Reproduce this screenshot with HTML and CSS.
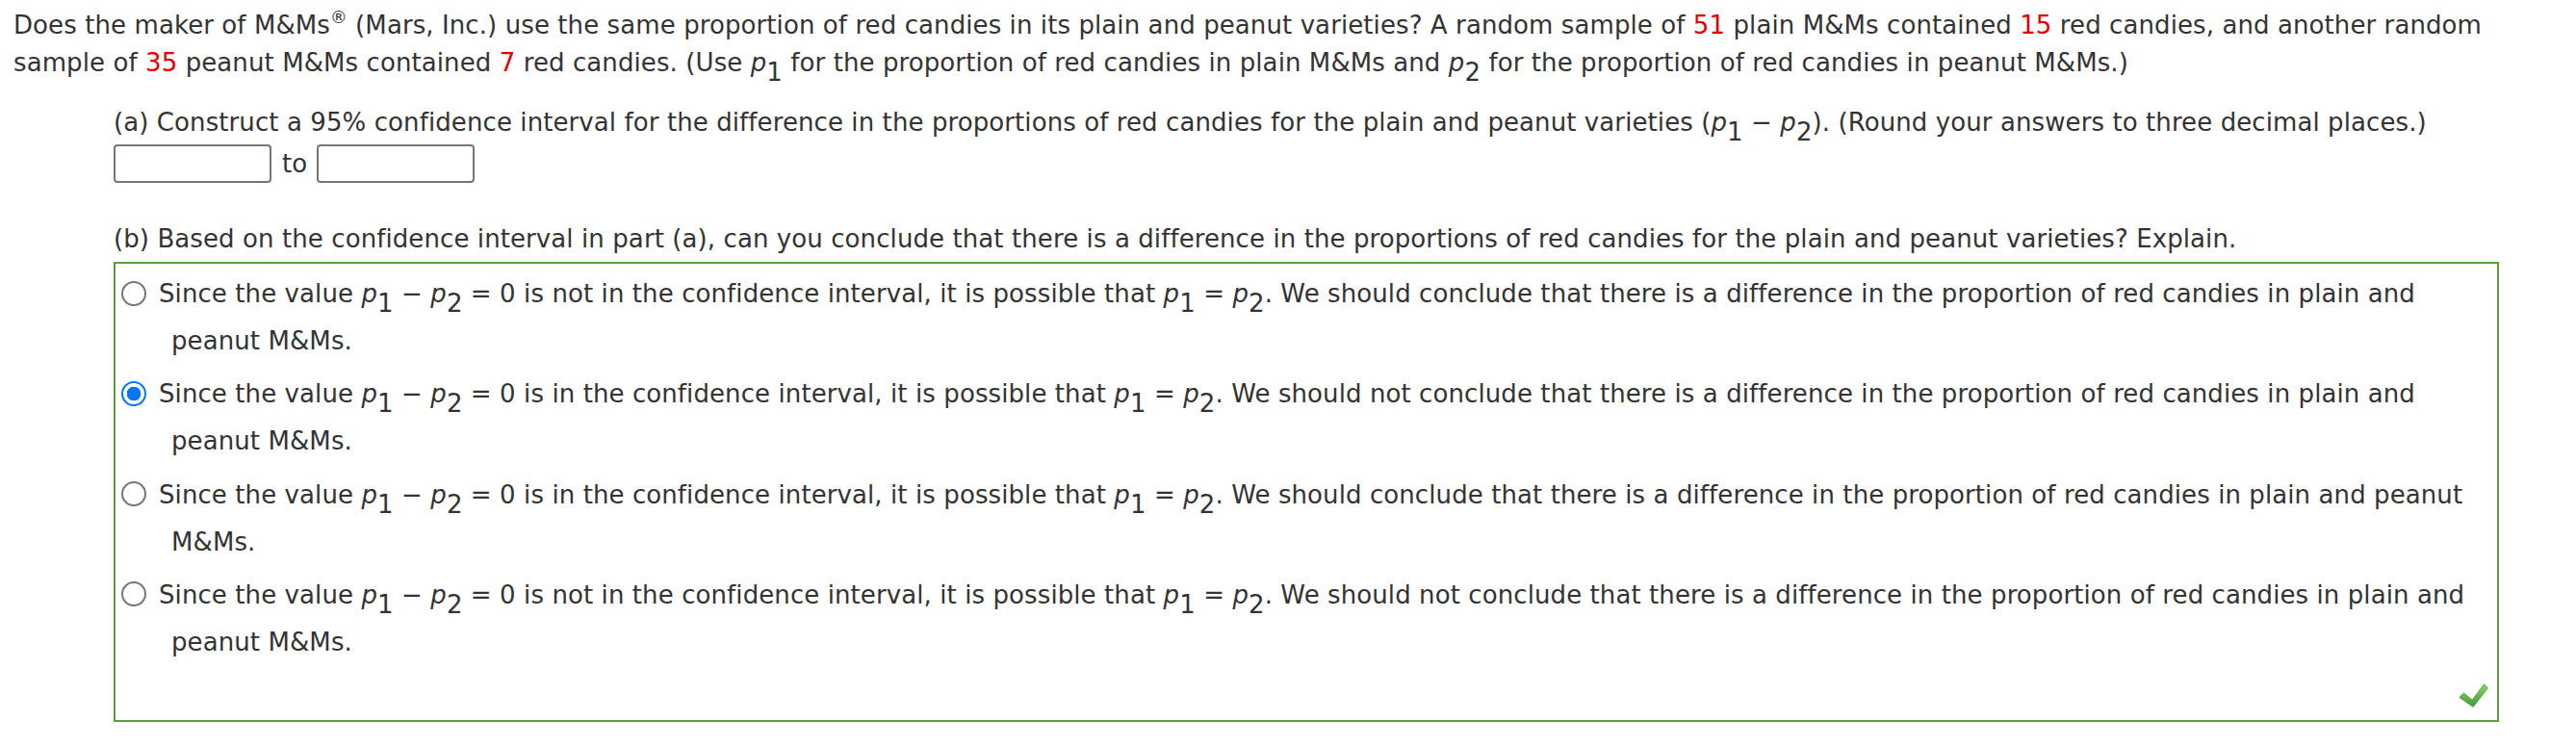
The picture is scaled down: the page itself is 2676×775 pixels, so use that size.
FILE: index.html
```html
<!DOCTYPE html>
<html lang="en">
<head>
<meta charset="utf-8">
<title>Red candies in M&amp;Ms</title>
<link rel="stylesheet" href="styles.css">
</head>
<body>
<div class="page">
  <p class="question">Does the maker of M&amp;Ms<sup>®</sup> (Mars, Inc.) use the same proportion of red candies in its plain and peanut varieties? A random sample of <span class="num">51</span> plain M&amp;Ms contained <span class="num">15</span> red candies, and another random sample of <span class="num">35</span> peanut M&amp;Ms contained <span class="num">7</span> red candies. (Use <i>p</i><sub>1</sub> for the proportion of red candies in plain M&amp;Ms and <i>p</i><sub>2</sub> for the proportion of red candies in peanut M&amp;Ms.)</p>

  <div class="parts">
    <div class="part-a">
      <p class="lead">(a) Construct a 95% confidence interval for the difference in the proportions of red candies for the plain and peanut varieties (<i>p</i><sub>1</sub> − <i>p</i><sub>2</sub>). (Round your answers to three decimal places.)</p>
      <div class="interval">
        <input class="ans" type="text" aria-label="lower bound">
        <span class="to">to</span>
        <input class="ans" type="text" aria-label="upper bound">
      </div>
    </div>

    <div class="part-b">
      <p class="lead">(b) Based on the confidence interval in part (a), can you conclude that there is a difference in the proportions of red candies for the plain and peanut varieties? Explain.</p>
      <div class="answer-box">
        <label class="choice">
          <input class="radio" type="radio" name="b">
          <span class="choice-text">Since the value <i>p</i><sub>1</sub> − <i>p</i><sub>2</sub> = 0 is not in the confidence interval, it is possible that <i>p</i><sub>1</sub> = <i>p</i><sub>2</sub>. We should conclude that there is a difference in the proportion of red candies in plain and peanut M&amp;Ms.</span>
        </label>
        <label class="choice">
          <input class="radio" type="radio" name="b" checked>
          <span class="choice-text">Since the value <i>p</i><sub>1</sub> − <i>p</i><sub>2</sub> = 0 is in the confidence interval, it is possible that <i>p</i><sub>1</sub> = <i>p</i><sub>2</sub>. We should not conclude that there is a difference in the proportion of red candies in plain and peanut M&amp;Ms.</span>
        </label>
        <label class="choice">
          <input class="radio" type="radio" name="b">
          <span class="choice-text">Since the value <i>p</i><sub>1</sub> − <i>p</i><sub>2</sub> = 0 is in the confidence interval, it is possible that <i>p</i><sub>1</sub> = <i>p</i><sub>2</sub>. We should conclude that there is a difference in the proportion of red candies in plain and peanut M&amp;Ms.</span>
        </label>
        <label class="choice">
          <input class="radio" type="radio" name="b">
          <span class="choice-text">Since the value <i>p</i><sub>1</sub> − <i>p</i><sub>2</sub> = 0 is not in the confidence interval, it is possible that <i>p</i><sub>1</sub> = <i>p</i><sub>2</sub>. We should not conclude that there is a difference in the proportion of red candies in plain and peanut M&amp;Ms.</span>
        </label>
        <div class="mark">
          <svg class="check" width="31" height="25" viewBox="0 0 31 25" aria-label="correct">
            <defs>
              <linearGradient id="g" x1="0" y1="0" x2="0" y2="1">
                <stop offset="0" stop-color="#8fd46c"/>
                <stop offset="1" stop-color="#3e9b33"/>
              </linearGradient>
            </defs>
            <polygon points="0.8,14.5 5.5,10 14.2,17.2 26.5,0.8 30.4,4.8 15.2,24.4" fill="url(#g)" stroke="#4f9f3f" stroke-width="0.9" stroke-linejoin="round"/>
          </svg>
        </div>
      </div>
    </div>
  </div>
</div>
</body>
</html>
```

FILE: styles.css
```css
html, body {
  margin: 0;
  padding: 0;
  background: #ffffff;
}

body {
  font-family: "DejaVu Sans", Verdana, sans-serif;
  font-size: 26px;
  line-height: 1.5;
  letter-spacing: 0.09px;
  color: #333333;
}

.page {
  padding: 6.5px 0 0 14px;
}

p {
  margin: 0;
}

i {
  font-style: italic;
}

sub {
  font-size: 100%;
  vertical-align: -10px;
  line-height: 0;
}

sup {
  font-size: 68%;
  vertical-align: 11px;
  line-height: 0;
}

.num {
  color: #e00000;
}

.question {
  margin-right: 80px;
}

.parts {
  margin: 0 80px 0 104px;
}

.part-a {
  margin-top: 23.6px;
}

.interval {
  display: flex;
  align-items: center;
  gap: 10px;
  margin-top: 2.5px;
}

.ans {
  box-sizing: border-box;
  width: 164px;
  height: 40px;
  margin: 0;
  padding: 0 6px;
  border: 2px solid #767676;
  border-radius: 4px;
  background: #ffffff;
  font: inherit;
}

.to {
  line-height: 40px;
  padding-left: 1px;
}

.part-b {
  margin-top: 39px;
}

.answer-box {
  margin-top: 4px;
  border: 2px solid #5c9e3c;
  padding: 12.5px 12px 13px 6px;
}

.choice {
  display: flex;
  align-items: flex-start;
}

.choice + .choice {
  margin-top: 16.3px;
}

.radio {
  appearance: none;
  -webkit-appearance: none;
  flex: none;
  box-sizing: border-box;
  width: 26px;
  height: 26px;
  margin: 5.5px 0 0 0;
  border: 2px solid #767676;
  border-radius: 50%;
  background: #ffffff;
}

.radio:checked {
  border-color: #0075ff;
  background: radial-gradient(circle, #0075ff 0 7px, #ffffff 7.6px);
}

.choice-text {
  display: block;
  padding-left: 26px;
  text-indent: -13px;
}

.choice-text sub {
  line-height: inherit;
}

.mark {
  display: flex;
  justify-content: flex-end;
  line-height: 0;
  margin-top: 22.6px;
}

.check {
  display: block;
  margin-right: -3px;
}
```
